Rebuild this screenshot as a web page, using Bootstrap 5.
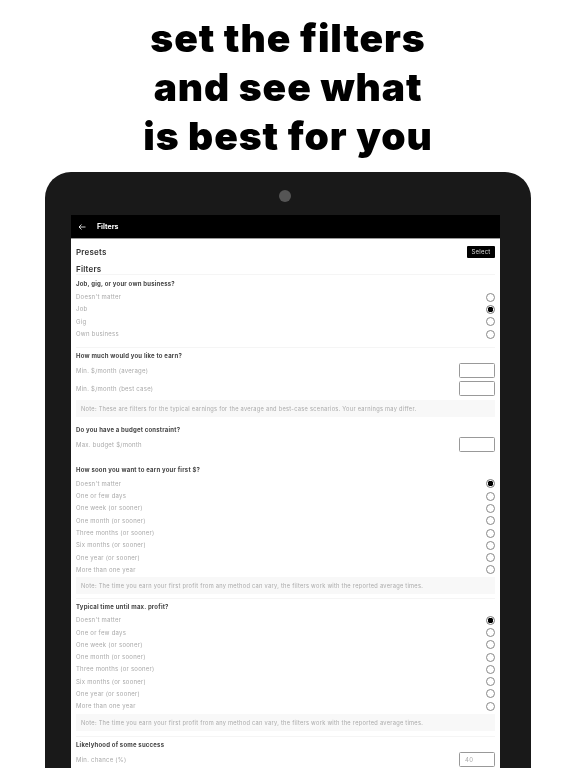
<!doctype html>
<html lang="en"><head><meta charset="utf-8"><title>Filters</title>
<link href="https://cdn.jsdelivr.net/npm/bootstrap@5.3.0/dist/css/bootstrap.min.css" rel="stylesheet">
<style>
html,body{height:768px;overflow:hidden;background:#fff}
body{font-family:Inter,"Liberation Sans",sans-serif;color:#222}
.promo{margin:0;height:172px;padding-top:13px;font-size:39px;line-height:49px;font-weight:900;color:#000;text-align:center;letter-spacing:.9px;will-change:transform}
.tablet{width:486px;margin-left:45px;height:596px;background:#191919;border-radius:26px 26px 0 0;padding-top:43px;padding-left:26px;padding-right:31px;position:relative}
.lens{width:12px;height:12px;border-radius:50%;background:#555;position:absolute;left:234px;top:18px}
.screen{background:#fff;height:553px;overflow:hidden;will-change:transform}
.appbar{height:24px;background:#000;color:#fff;font-size:7px;font-weight:700;padding-left:7px;gap:11px;border-bottom:1px solid #999}
.appbar svg{width:8px;height:8px}
.appbar span{position:relative;top:1px}
.body-pad{padding:0 5px}
.presets{height:25px}
.h-strong{font-size:8px;font-weight:600;color:#333;line-height:10px;letter-spacing:.2px}
.btn-pick{background:#000;color:#ddd;font-size:6px;border-radius:1px;width:28px;height:12px;padding:0;border:0;line-height:12px;letter-spacing:.2px}
.qtitle{font-size:6px;font-weight:700;color:#444;line-height:8px;height:8px;letter-spacing:.2px}
.qt-first{margin-top:5px}
.qt-next{margin-top:4px}
.qt-budget{margin-top:9px}
.qt-soon{margin-top:12px}
.opt{height:12.3px;font-size:6px;color:#aaa;line-height:12px;letter-spacing:.25px}
.opt input.form-check-input{width:9px;height:9px;margin:0;border:.6px solid #888;background-color:#fff;flex:none}
.opt input.form-check-input:checked{background-color:#fff;border-color:#777;background-image:radial-gradient(circle,#000 0 2.6px,transparent 3px)}
.opt-list{padding-top:3px}
.opt-list-wide{padding-top:4px}
.sec-line{border-bottom:1px solid #f5f5f5}
.rule-thin{height:1px}
.rule-gap{height:5px}
.rule-gap-tall{height:6px}
.pad-low{padding-bottom:7px}
.field{font-size:6px;color:#aaa;height:18.5px;letter-spacing:.25px}
.field-first{margin-top:1px}
.boxin{width:36px;height:15px;border:.8px solid #999;border-radius:1.5px;font-size:6px;color:#aaa;padding:0 0 0 5px;line-height:14px}
.note{background:#f8f8f8;color:#aaa;font-size:5.7px;height:17px;line-height:17px;padding-left:5px;margin-top:1px;white-space:nowrap;overflow:hidden;letter-spacing:.27px}
.note-low{margin-top:2px}
</style></head><body>
<h1 class="promo">set the filters<br>and see what<br>is best for you</h1>
<div class="tablet"><div class="lens"></div>
<div class="screen">
<div class="appbar d-flex align-items-center"><svg viewBox="0 0 16 16" fill="none" stroke="#fff" stroke-width="1.6"><path d="M15 8H2M7 3 2 8l5 5"/></svg><span>Filters</span></div>
<div class="body-pad">
<div class="presets d-flex justify-content-between align-items-center"><span class="h-strong">Presets</span><button class="btn-pick" type="button">Select</button></div>
<div class="h-strong">Filters</div>
<div class="sec-line rule-thin"></div>

<div class="qtitle qt-first">Job, gig, or your own business?</div>
<div class="opt-list sec-line pad-low">
<div class="opt d-flex justify-content-between align-items-center"><span>Doesn't matter</span><input class="form-check-input" type="radio" name="a"></div>
<div class="opt d-flex justify-content-between align-items-center"><span>Job</span><input class="form-check-input" type="radio" name="a" checked></div>
<div class="opt d-flex justify-content-between align-items-center"><span>Gig</span><input class="form-check-input" type="radio" name="a"></div>
<div class="opt d-flex justify-content-between align-items-center"><span>Own business</span><input class="form-check-input" type="radio" name="a"></div>
</div>

<div class="qtitle qt-next">How much would you like to earn?</div>
<div class="field field-first d-flex justify-content-between align-items-center"><span>Min. $/month (average)</span><div class="boxin"></div></div>
<div class="field d-flex justify-content-between align-items-center"><span>Min. $/month (best case)</span><div class="boxin"></div></div>
<div class="note note-low">Note: These are filters for the typical earnings for the average and best-case scenarios. Your earnings may differ.</div>

<div class="qtitle qt-budget">Do you have a budget constraint?</div>
<div class="field field-first d-flex justify-content-between align-items-center"><span>Max. budget $/month</span><div class="boxin"></div></div>

<div class="qtitle qt-soon">How soon you want to earn your first $?</div>
<div class="opt-list-wide">
<div class="opt d-flex justify-content-between align-items-center"><span>Doesn't matter</span><input class="form-check-input" type="radio" name="b" checked></div>
<div class="opt d-flex justify-content-between align-items-center"><span>One or few days</span><input class="form-check-input" type="radio" name="b"></div>
<div class="opt d-flex justify-content-between align-items-center"><span>One week (or sooner)</span><input class="form-check-input" type="radio" name="b"></div>
<div class="opt d-flex justify-content-between align-items-center"><span>One month (or sooner)</span><input class="form-check-input" type="radio" name="b"></div>
<div class="opt d-flex justify-content-between align-items-center"><span>Three months (or sooner)</span><input class="form-check-input" type="radio" name="b"></div>
<div class="opt d-flex justify-content-between align-items-center"><span>Six months (or sooner)</span><input class="form-check-input" type="radio" name="b"></div>
<div class="opt d-flex justify-content-between align-items-center"><span>One year (or sooner)</span><input class="form-check-input" type="radio" name="b"></div>
<div class="opt d-flex justify-content-between align-items-center"><span>More than one year</span><input class="form-check-input" type="radio" name="b"></div>
</div>
<div class="note">Note: The time you earn your first profit from any method can vary, the filters work with the reported average times.</div>
<div class="sec-line rule-gap"></div>

<div class="qtitle qt-next">Typical time until max. profit?</div>
<div class="opt-list">
<div class="opt d-flex justify-content-between align-items-center"><span>Doesn't matter</span><input class="form-check-input" type="radio" name="c" checked></div>
<div class="opt d-flex justify-content-between align-items-center"><span>One or few days</span><input class="form-check-input" type="radio" name="c"></div>
<div class="opt d-flex justify-content-between align-items-center"><span>One week (or sooner)</span><input class="form-check-input" type="radio" name="c"></div>
<div class="opt d-flex justify-content-between align-items-center"><span>One month (or sooner)</span><input class="form-check-input" type="radio" name="c"></div>
<div class="opt d-flex justify-content-between align-items-center"><span>Three months (or sooner)</span><input class="form-check-input" type="radio" name="c"></div>
<div class="opt d-flex justify-content-between align-items-center"><span>Six months (or sooner)</span><input class="form-check-input" type="radio" name="c"></div>
<div class="opt d-flex justify-content-between align-items-center"><span>One year (or sooner)</span><input class="form-check-input" type="radio" name="c"></div>
<div class="opt d-flex justify-content-between align-items-center"><span>More than one year</span><input class="form-check-input" type="radio" name="c"></div>
</div>
<div class="note note-low">Note: The time you earn your first profit from any method can vary, the filters work with the reported average times.</div>
<div class="sec-line rule-gap-tall"></div>

<div class="qtitle qt-next">Likelyhood of some success</div>
<div class="field field-first d-flex justify-content-between align-items-center"><span>Min. chance (%)</span><div class="boxin">40</div></div>
</div></div></div>
</body></html>
